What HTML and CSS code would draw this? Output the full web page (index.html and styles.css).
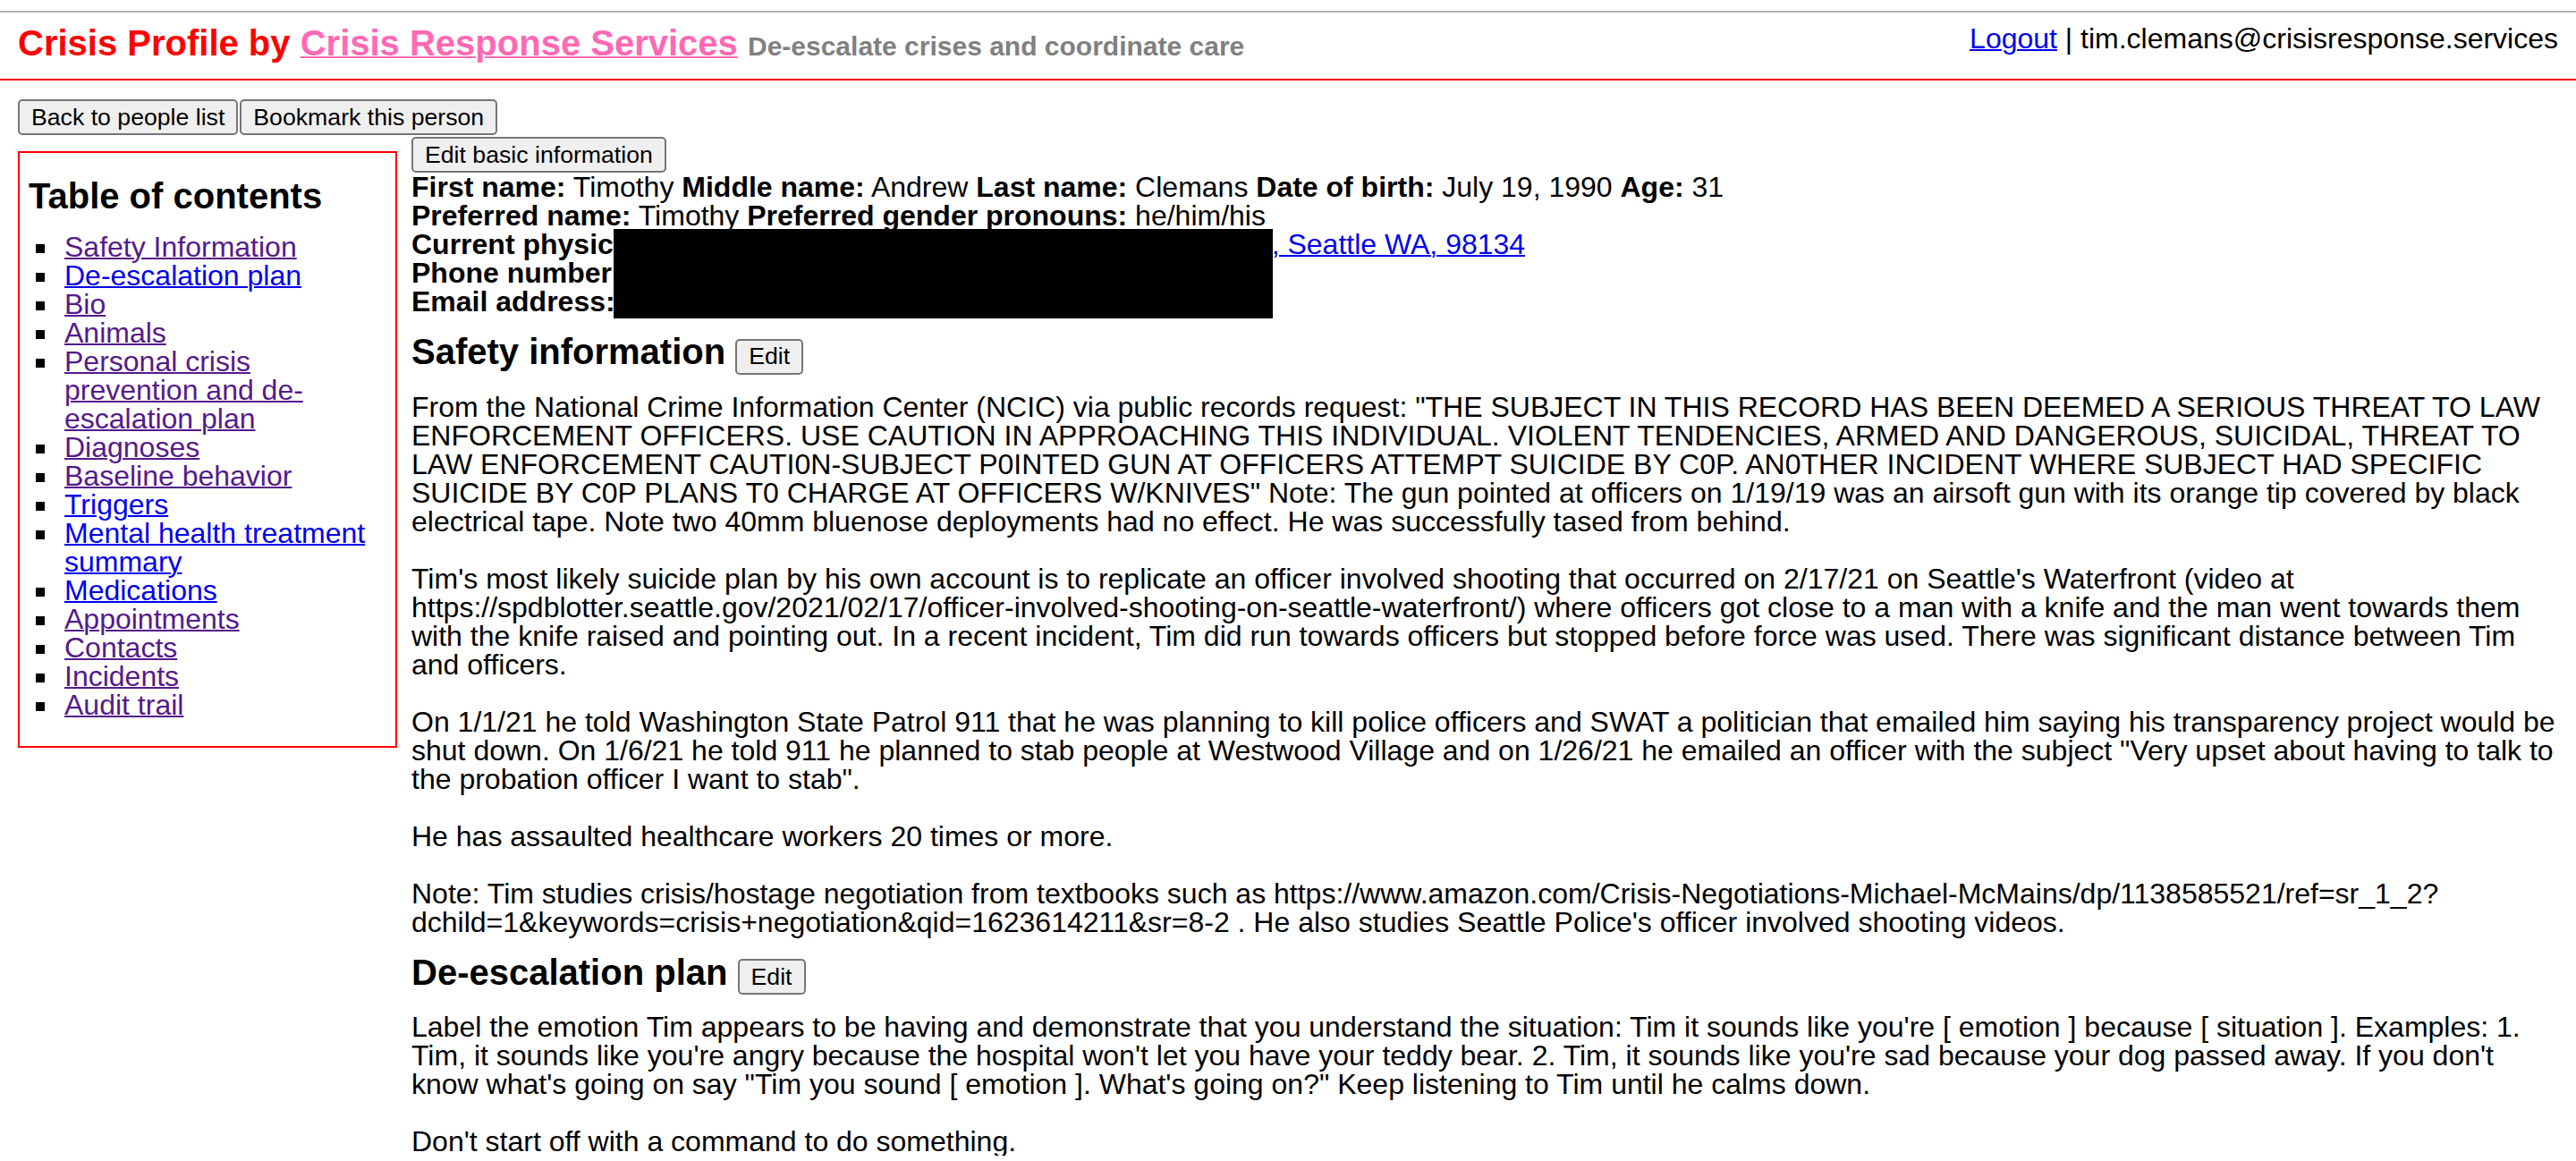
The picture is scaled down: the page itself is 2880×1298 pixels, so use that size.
FILE: index.html
```html
<!DOCTYPE html>
<html lang="en">
<head>
<meta charset="utf-8">
<title>Crisis Profile - Timothy Clemans</title>
<link rel="stylesheet" href="styles.css">
</head>
<body>
<header class="site-header">
  <h1 class="site-title">Crisis Profile by <a class="brand-link" href="#">Crisis Response Services</a> <span class="tagline">De-escalate crises and coordinate care</span></h1>
  <div class="account"><a class="logout" href="#">Logout</a> | tim.clemans@crisisresponse.services</div>
</header>
<div class="page">
  <div class="toolbar">
    <button class="btn" type="button">Back to people list</button><button class="btn" type="button">Bookmark this person</button>
  </div>
  <div class="layout">
    <nav class="toc">
      <h2 class="toc-title">Table of contents</h2>
      <ul class="toc-list">
        <li><a class="visited" href="#safety">Safety Information</a></li>
        <li><a href="#deescalation">De-escalation plan</a></li>
        <li><a class="visited" href="#bio">Bio</a></li>
        <li><a class="visited" href="#animals">Animals</a></li>
        <li><a class="visited" href="#personal">Personal crisis prevention and de-escalation plan</a></li>
        <li><a class="visited" href="#diagnoses">Diagnoses</a></li>
        <li><a class="visited" href="#baseline">Baseline behavior</a></li>
        <li><a href="#triggers">Triggers</a></li>
        <li><a href="#mental">Mental health treatment summary</a></li>
        <li><a href="#medications">Medications</a></li>
        <li><a class="visited" href="#appointments">Appointments</a></li>
        <li><a class="visited" href="#contacts">Contacts</a></li>
        <li><a class="visited" href="#incidents">Incidents</a></li>
        <li><a class="visited" href="#audit">Audit trail</a></li>
      </ul>
    </nav>
    <main class="profile">
      <button class="btn btn-block" type="button">Edit basic information</button>
      <div class="basic-info">
        <div><b>First name:</b> Timothy <b>Middle name:</b> Andrew <b>Last name:</b> Clemans <b>Date of birth:</b> July 19, 1990 <b>Age:</b> 31</div>
        <div><b>Preferred name:</b> Timothy <b>Preferred gender pronouns:</b> he/him/his</div>
        <div><b>Current physical address:</b> <a class="addr" href="#"><span class="addr-hidden"></span>, Seattle WA, 98134</a></div>
        <div><b>Phone number:</b></div>
        <div><b>Email address:</b></div>
        <div class="redaction"></div>
      </div>

      <h2 class="section-title" id="safety">Safety information <button class="btn" type="button">Edit</button></h2>
      <div class="section-text">
        <p>From the National Crime Information Center (NCIC) via public records request: "THE SUBJECT IN THIS RECORD HAS BEEN DEEMED A SERIOUS THREAT TO LAW ENFORCEMENT OFFICERS. USE CAUTION IN APPROACHING THIS INDIVIDUAL. VIOLENT TENDENCIES, ARMED AND DANGEROUS, SUICIDAL, THREAT TO LAW ENFORCEMENT CAUTI0N-SUBJECT P0INTED GUN AT OFFICERS ATTEMPT SUICIDE BY C0P. AN0THER INCIDENT WHERE SUBJECT HAD SPECIFIC SUICIDE BY C0P PLANS T0 CHARGE AT OFFICERS W/KNIVES" Note: The gun pointed at officers on 1/19/19 was an airsoft gun with its orange tip covered by black electrical tape. Note two 40mm bluenose deployments had no effect. He was successfully tased from behind.</p>
        <p>Tim's most likely suicide plan by his own account is to replicate an officer involved shooting that occurred on 2/17/21 on Seattle's Waterfront (video at https://spdblotter.seattle.gov/2021/02/17/officer-involved-shooting-on-seattle-waterfront/) where officers got close to a man with a knife and the man went towards them with the knife raised and pointing out. In a recent incident, Tim did run towards officers but stopped before force was used. There was significant distance between Tim and officers.</p>
        <p>On 1/1/21 he told Washington State Patrol 911 that he was planning to kill police officers and SWAT a politician that emailed him saying his transparency project would be shut down. On 1/6/21 he told 911 he planned to stab people at Westwood Village and on 1/26/21 he emailed an officer with the subject "Very upset about having to talk to the probation officer I want to stab".</p>
        <p>He has assaulted healthcare workers 20 times or more.</p>
        <p>Note: Tim studies crisis/hostage negotiation from textbooks such as https://www.amazon.com/Crisis-Negotiations-Michael-McMains/dp/1138585521/ref=sr_1_2?dchild=1&amp;keywords=crisis+negotiation&amp;qid=1623614211&amp;sr=8-2 . He also studies Seattle Police's officer involved shooting videos.</p>
      </div>

      <h2 class="section-title" id="deescalation">De-escalation plan <button class="btn" type="button">Edit</button></h2>
      <div class="section-text">
        <p>Label the emotion Tim appears to be having and demonstrate that you understand the situation: Tim it sounds like you're [ emotion ] because [ situation ]. Examples: 1. Tim, it sounds like you're angry because the hospital won't let you have your teddy bear. 2. Tim, it sounds like you're sad because your dog passed away. If you don't know what's going on say "Tim you sound [ emotion ]. What's going on?" Keep listening to Tim until he calms down.</p>
        <p>Don't start off with a command to do something.</p>
      </div>
    </main>
  </div>
</div>
</body>
</html>
```

FILE: styles.css
```css
html, body {
  margin: 0;
  padding: 0;
}

body {
  font-family: "Liberation Sans", Arial, Helvetica, sans-serif;
  font-size: 32px;
  line-height: 32px;
  color: #000;
  background: #fff;
}

a {
  text-decoration-thickness: 2px;
}

/* Header */
.site-header {
  margin-top: 12px;
  border-top: 2px solid #b3b3b3;
  border-bottom: 2px solid #ff0000;
  padding: 14px 20px 20px;
  display: flex;
  justify-content: space-between;
  align-items: flex-start;
}

.site-title {
  margin: 0;
  font-size: 40px;
  line-height: 40px;
  font-weight: bold;
  color: #ff0000;
}

.brand-link {
  color: #ff69b4;
}

.tagline {
  font-size: 30px;
  line-height: 30px;
  color: #808080;
}

.account {
  margin-top: -1px;
  white-space: nowrap;
}

.logout {
  color: #0000ee;
}

/* Page */
.page {
  padding: 21px 20px 0;
}

.toolbar {
  display: flex;
  gap: 2px;
}

.btn {
  font-family: "Liberation Sans", Arial, Helvetica, sans-serif;
  font-size: 26.67px;
  line-height: normal;
  height: 40px;
  padding: 0 13px;
  margin: 0;
  border: 2px solid #767676;
  border-radius: 5px;
  background: #efefef;
  color: #000;
  box-sizing: border-box;
  vertical-align: baseline;
}

.layout {
  display: flex;
  align-items: flex-start;
  gap: 16px;
  margin-top: 2px;
}

/* Table of contents */
.toc {
  flex: none;
  width: 400px;
  border: 2px solid #ff0000;
  padding: 10px;
  margin-top: 16px;
}

.toc-title {
  font-size: 40px;
  line-height: 40px;
  margin: 18px 0 21px;
}

.toc-list {
  list-style: none;
  margin: 0 0 20px;
  padding: 0;
}

.toc-list li {
  display: flex;
  align-items: flex-start;
}

.toc-list li::before {
  content: "";
  flex: none;
  width: 10px;
  height: 10px;
  margin: 13px 22px 0 8px;
  background: #000;
}

.toc-list a {
  color: #0000ee;
}

.toc-list a.visited {
  color: #551a8b;
}

/* Profile */
.profile {
  flex: 1;
  min-width: 0;
}

.btn-block {
  display: block;
}

.basic-info {
  position: relative;
}

.addr {
  color: #0000ee;
}

.addr-hidden {
  display: inline-block;
  width: 558px;
}

.redaction {
  position: absolute;
  left: 226px;
  top: 63px;
  width: 737px;
  height: 100px;
  background: #000;
}

.section-title {
  font-size: 40px;
  line-height: 40px;
  margin: 20px 0;
}

.section-text p {
  margin: 0;
}

.section-text p + p {
  margin-top: 32px;
}
```
